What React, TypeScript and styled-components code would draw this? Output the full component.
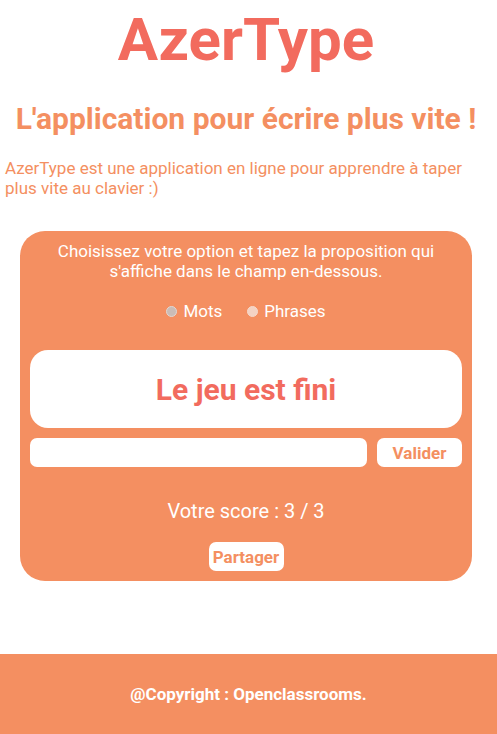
import React from "react";
import styled, { createGlobalStyle } from "styled-components";

const ORANGE = "#F48F61";
const CORAL = "#F26B5E";

const Global = createGlobalStyle`
  html, body { margin: 0; padding: 0; background: #ffffff; }
  body { font-family: Roboto, "Noto Sans", Arial, sans-serif; }
  * { box-sizing: border-box; }
`;

const Page = styled.div`
  min-height: 734px;
  display: flex;
  flex-direction: column;
`;

const Main = styled.main`
  flex: 1;
  padding: 0 10px 0 5px;
`;

const Title = styled.h1`
  margin: 0;
  padding-top: 5px;
  font-size: 60px;
  font-weight: 700;
  color: ${CORAL};
  text-align: center;
  line-height: 70px;
`;

const Subtitle = styled.h2`
  margin: 26px 0 0;
  font-size: 30px;
  font-weight: 700;
  color: ${ORANGE};
  text-align: center;
  line-height: 36px;
`;

const Intro = styled.p`
  margin: 21px 0 0;
  font-size: 17px;
  line-height: 20px;
  color: ${ORANGE};
`;

const Panel = styled.section`
  margin: 33px 15px 0;
  background: ${ORANGE};
  border-radius: 25px;
  padding: 10px 10px 10px;
  display: flex;
  flex-direction: column;
  align-items: stretch;
  color: #ffffff;
`;

const Instructions = styled.p`
  margin: 0 auto;
  max-width: 400px;
  font-size: 17px;
  line-height: 20px;
  text-align: center;
`;

const Options = styled.div`
  margin-top: 20px;
  display: flex;
  justify-content: center;
  gap: 25px;
  font-size: 17px;
  line-height: 20px;
`;

const Option = styled.label`
  display: flex;
  align-items: center;
  gap: 6px;
`;

const Dot = styled.span<{ $checked?: boolean }>`
  width: 11px;
  height: 11px;
  border-radius: 50%;
  background: ${(p) => (p.$checked ? "#cbbcb6" : "#f4d2c3")};
  border: 1.5px solid ${(p) => (p.$checked ? "#e2d8d4" : "#f6d9cc")};
`;

const Proposal = styled.div`
  margin-top: 29px;
  height: 78px;
  background: #ffffff;
  border-radius: 18px;
  display: flex;
  align-items: center;
  justify-content: center;
  font-size: 30px;
  font-weight: 700;
  color: ${CORAL};
`;

const InputRow = styled.div`
  margin-top: 10px;
  display: flex;
  gap: 10px;
`;

const Field = styled.div`
  flex: 1;
  height: 29px;
  background: #ffffff;
  border-radius: 7px;
`;

const Button = styled.button<{ $width: number }>`
  width: ${(p) => p.$width}px;
  height: 29px;
  border: none;
  border-radius: 7px;
  background: #ffffff;
  color: ${ORANGE};
  font-family: Roboto, "Noto Sans", Arial, sans-serif;
  font-size: 17px;
  font-weight: 700;
  padding: 0;
`;

const Score = styled.div`
  margin-top: 32px;
  text-align: center;
  font-size: 20px;
  line-height: 24px;
`;

const ShareRow = styled.div`
  margin-top: 19px;
  display: flex;
  justify-content: center;
`;

const Footer = styled.footer`
  height: 80px;
  background: ${ORANGE};
  display: flex;
  align-items: center;
  justify-content: center;
  color: #ffffff;
  font-size: 17px;
  font-weight: 700;
`;

export default function App() {
  return (
    <Page>
      <Global />
      <Main>
        <Title>AzerType</Title>
        <Subtitle>L'application pour écrire plus vite !</Subtitle>
        <Intro>
          AzerType est une application en ligne pour apprendre à taper plus vite au clavier :)
        </Intro>
        <Panel>
          <Instructions>
            Choisissez votre option et tapez la proposition qui s'affiche dans le champ en-dessous.
          </Instructions>
          <Options>
            <Option>
              <Dot $checked />
              Mots
            </Option>
            <Option>
              <Dot />
              Phrases
            </Option>
          </Options>
          <Proposal>Le jeu est fini</Proposal>
          <InputRow>
            <Field />
            <Button $width={85}>Valider</Button>
          </InputRow>
          <Score>Votre score : 3 / 3</Score>
          <ShareRow>
            <Button $width={75}>Partager</Button>
          </ShareRow>
        </Panel>
      </Main>
      <Footer>@Copyright : Openclassrooms.</Footer>
    </Page>
  );
}
